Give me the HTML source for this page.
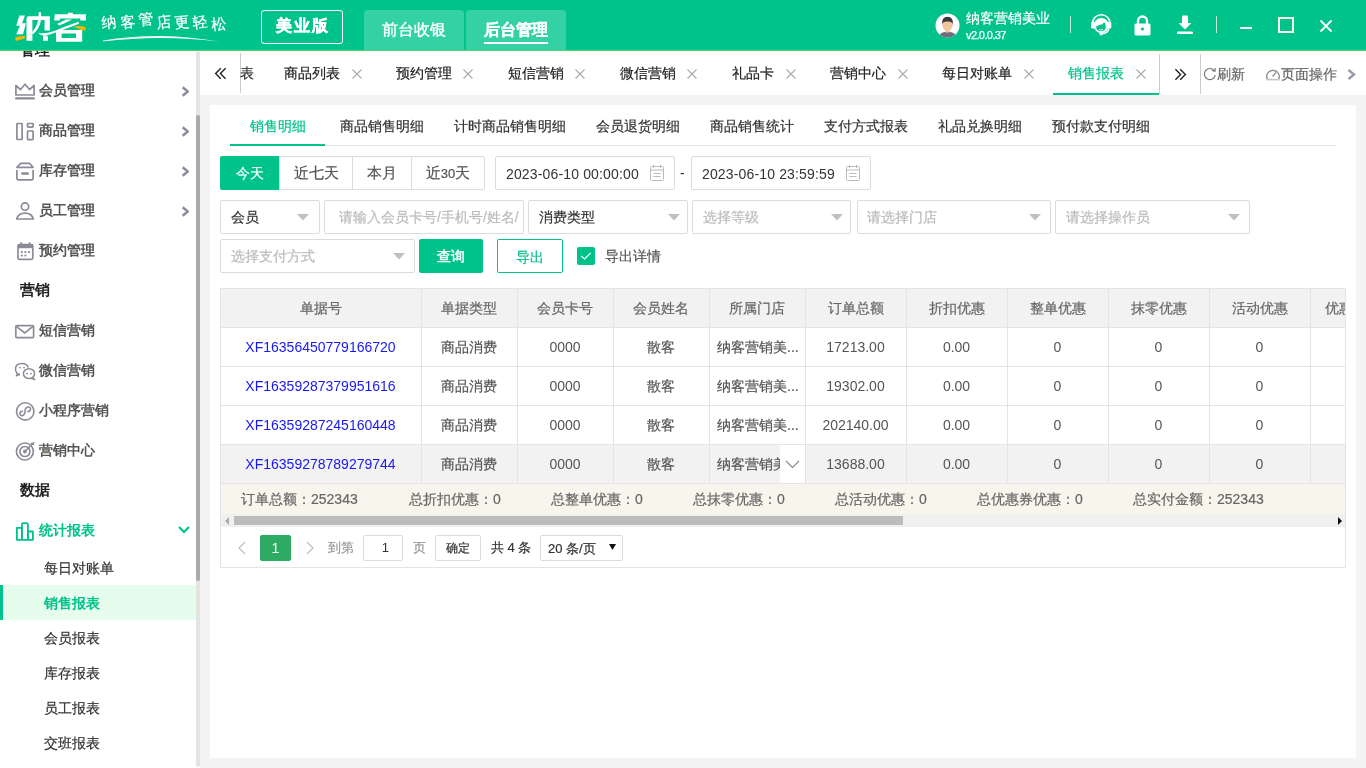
<!DOCTYPE html>
<html><head><meta charset="utf-8">
<style>
*{box-sizing:border-box;margin:0;padding:0}
html,body{width:1366px;height:768px;overflow:hidden;background:#f4f4f4;font-family:"Liberation Sans",sans-serif;font-size:14px;color:#333}
.a{position:absolute;white-space:nowrap}
body>div{will-change:transform}
.a{-webkit-text-stroke:0.2px currentColor}
.a[style*="bold"]{-webkit-text-stroke:0}
#hdr{position:absolute;left:0;top:0;width:1366px;height:51px;background:#00c28b;border-bottom:1px solid #4fd470;z-index:5}
#side{position:absolute;left:0;top:51px;width:200px;height:717px;background:#fff;overflow:hidden}
#tabbar{position:absolute;left:200px;top:51px;width:1166px;height:44px;background:#fff}
#panel{position:absolute;left:210px;top:105px;width:1146px;height:653px;background:#fff}
</style></head><body>
<div id="hdr">
<svg class="a" style="left:10px;top:5px" width="85" height="42" viewBox="0 0 1366 675">
<g fill="#fff">
<path d="M150 168 L240 168 L195 295 L255 295 L210 470 L100 470 L160 335 L100 335 Z"/>
<path d="M460 115 H500 V180 H640 V410 H555 V240 H360 V575 H265 V220 Q265 180 300 180 H460 Z"/>
<path d="M455 235 Q430 360 350 440 L370 470 Q480 380 500 235 Z"/>
<path d="M530 500 H610 V575 H530 Z"/>
<path d="M720 150 H930 V125 H1010 V150 H1220 V250 H1130 V215 H800 V250 H710 Z"/>
<path d="M900 235 L1000 235 Q880 300 790 330 L760 300 Q840 270 900 235 Z"/>
<path d="M1100 270 L1110 300 Q800 420 560 500 Q500 500 450 445 Q560 470 700 420 Q900 340 1100 270 Z"/>
<path d="M740 400 H1160 V590 H740 Z M830 460 V530 H1060 V460 Z" fill-rule="evenodd"/>
</g>
<path d="M85 520 Q160 500 245 500 L235 540 Q160 560 90 578 Z" fill="#f5b800"/>
<path d="M1030 345 Q1110 330 1220 355 L1210 410 Q1130 400 1050 360 Z" fill="#f5b800"/>
</svg>
<div class="a" style="left:101px;top:15px;font-size:15px;line-height:15px;color:#fff;font-family:'Liberation Serif',serif;transform:rotate(-6deg)">纳</div><div class="a" style="left:120px;top:15px;font-size:15px;line-height:15px;color:#fff;font-family:'Liberation Serif',serif;transform:rotate(-6deg)">客</div><div class="a" style="left:138px;top:12px;font-size:15px;line-height:15px;color:#fff;font-family:'Liberation Serif',serif;transform:rotate(-6deg)">管</div><div class="a" style="left:156px;top:15px;font-size:15px;line-height:15px;color:#fff;font-family:'Liberation Serif',serif;transform:rotate(-6deg)">店</div><div class="a" style="left:174px;top:15px;font-size:15px;line-height:15px;color:#fff;font-family:'Liberation Serif',serif;transform:rotate(-6deg)">更</div><div class="a" style="left:192px;top:15px;font-size:15px;line-height:15px;color:#fff;font-family:'Liberation Serif',serif;transform:rotate(-6deg)">轻</div><div class="a" style="left:211px;top:17px;font-size:15px;line-height:15px;color:#fff;font-family:'Liberation Serif',serif;transform:rotate(-6deg)">松</div>
<svg class="a" style="left:100px;top:32px" width="124" height="10"><path d="M3 8.6 Q60 -1.2 119 9.6 Q60 2.6 3 9.6Z" fill="#fff" opacity=".92"/></svg>
<div class="a" style="left:261px;top:10px;width:82px;height:34px;border:1px solid #fff;border-radius:3px;color:#fff;font-weight:bold;font-size:16px;letter-spacing:2px;padding-left:2px;text-align:center;line-height:30px;-webkit-text-stroke:0.5px #fff">美业版</div>
<div class="a" style="left:364px;top:10px;width:100px;height:40px;background:#33d1a3;border-radius:4px 4px 0 0;color:#fff;font-size:16px;text-align:center;line-height:40px;-webkit-text-stroke:0.35px #fff">前台收银</div>
<div class="a" style="left:466px;top:10px;width:100px;height:40px;background:#33d1a3;border-radius:4px 4px 0 0;color:#fff;font-size:16px;font-weight:bold;text-align:center;line-height:40px;-webkit-text-stroke:0.3px #fff">后台管理</div>
<div class="a" style="left:484px;top:42px;width:64px;height:2px;background:#fff"></div>
<svg class="a" style="left:935px;top:13px" width="25" height="25" viewBox="0 0 25 25">
<circle cx="12.5" cy="12.5" r="12" fill="#fff"/>
<clipPath id="cp"><circle cx="12.5" cy="12.5" r="12"/></clipPath>
<g clip-path="url(#cp)"><ellipse cx="12.5" cy="24.5" rx="9" ry="6" fill="#6e6e80"/><rect x="10.5" y="15.5" width="4" height="4" fill="#f3c59f"/><ellipse cx="12.5" cy="12.3" rx="5" ry="5.6" fill="#f3c59f"/><path d="M7 11.8 Q6.5 4 12.5 3.8 Q18.5 4 18 11.8 Q17 8.3 12.5 8.6 Q8 8.3 7 11.8Z" fill="#3a3a3a"/></g>
</svg>
<div class="a" style="left:966px;top:10px;font-size:14px;color:#fff;line-height:16px">纳客营销美业</div>
<div class="a" style="left:966px;top:29px;font-size:11px;color:#fff;line-height:13px;letter-spacing:-0.6px;-webkit-text-stroke:0.25px #fff">v2.0.0.37</div>
<div class="a" style="left:1070px;top:16px;width:1px;height:17px;background:#bfeedd"></div>
<svg class="a" style="left:1085px;top:10px" width="32" height="32" viewBox="0 0 32 32">
<path d="M7.5 13.5 A8.8 8.8 0 0 1 25.1 13.5" stroke="#fff" stroke-width="1.6" fill="none"/>
<circle cx="16.3" cy="15.5" r="7.6" fill="#fff"/>
<rect x="6" y="12" width="4.5" height="6.5" rx="1.2" fill="#fff"/><rect x="21.8" y="12" width="4.5" height="6.5" rx="1.2" fill="#fff"/>
<path d="M11 16.5 Q14 14.5 17.5 14.2 Q18.5 12.8 19.2 12.2 Q20.6 13.5 20.8 16.5 Q20.8 21 16 21.3 Q11.5 21 11 16.5Z" fill="#00c28b"/>
<path d="M14.2 19.6 Q16 20.6 18 19.4" stroke="#fff" stroke-width="0.9" fill="none"/>
<path d="M24 18.5 Q23 23.5 16.5 23.8" stroke="#fff" stroke-width="1.4" fill="none"/><circle cx="16" cy="23.8" r="1.6" fill="#fff"/>
</svg>
<svg class="a" style="left:1134px;top:15px" width="17" height="21" viewBox="0 0 17 21">
<path d="M4 9 V6 A4.5 4.5 0 0 1 13 6 V9" stroke="#fff" stroke-width="2.3" fill="none"/>
<rect x="0.5" y="8.5" width="16" height="12" rx="1.5" fill="#fff"/><circle cx="8.5" cy="14" r="1.6" fill="#00c28b"/>
</svg>
<svg class="a" style="left:1177px;top:15px" width="16" height="20" viewBox="0 0 16 20">
<rect x="5" y="0.5" width="6" height="8" rx="1" fill="#fff"/><path d="M1.5 8 H14.5 L8 14.5Z" fill="#fff"/><rect x="0" y="16.5" width="16" height="2.6" rx="1.2" fill="#fff"/>
</svg>
<div class="a" style="left:1216px;top:16px;width:1px;height:17px;background:#bfeedd"></div>
<div class="a" style="left:1240px;top:27px;width:12px;height:2px;background:#fff"></div>
<div class="a" style="left:1278px;top:17px;width:16px;height:16px;border:2px solid #fbfde8"></div>
<svg class="a" style="left:1319px;top:19px" width="14" height="14" viewBox="0 0 14 14"><path d="M1.5 1.5 L12.5 12.5 M12.5 1.5 L1.5 12.5" stroke="#fff" stroke-width="1.8"/></svg>
</div>
<div id="side"><svg class="a" style="left:0;top:-51px" width="196" height="768" viewBox="0 0 196 768" fill="none" stroke="#8b8b99" stroke-width="1.7">
<path d="M15.9 95 V85.5 L20.5 89.5 L25 84.2 L29.5 89.5 L34.1 85.5 V95 Z" stroke-linejoin="round"/><rect x="15" y="97.2" width="20" height="2.4" rx="1.1" fill="#8b8b99" stroke="none"/>
<rect x="16.9" y="123.5" width="5.2" height="16" rx="0.6"/><rect x="27.5" y="123.5" width="5.6" height="3.6" rx="0.6"/><rect x="27.5" y="131" width="5.6" height="8.6" rx="0.6"/>
<path d="M16.9 167.3 L20.6 163.3 H29.5 L33.1 167.3 Z" stroke-linejoin="round"/><path d="M16.9 170 V178 Q16.9 179.8 18.7 179.8 H31.3 Q33.1 179.8 33.1 178 V170"/><rect x="21.1" y="172.2" width="7.8" height="2.5" rx="1.2" fill="#8b8b99" stroke="none"/>
<circle cx="25" cy="206.6" r="3.7"/><path d="M16.6 219 Q18.5 213.2 25 213.2 Q31.5 213.2 33.4 219 Z" stroke-linejoin="round"/>
<rect x="18" y="244.6" width="14.8" height="14.8" rx="1.3"/><rect x="18" y="244.6" width="14.8" height="3.6" fill="#8b8b99" stroke="none"/><rect x="20.3" y="242.3" width="1.8" height="3" fill="#8b8b99" stroke="none"/><rect x="28.7" y="242.3" width="1.8" height="3" fill="#8b8b99" stroke="none"/>
<g fill="#8b8b99" stroke="none"><rect x="20.8" y="251.2" width="2" height="1.8"/><rect x="24.4" y="251.2" width="2" height="1.8"/><rect x="28" y="251.2" width="2" height="1.8"/><rect x="20.8" y="254.6" width="2" height="1.8"/><rect x="24.4" y="254.6" width="2" height="1.8"/></g>
<rect x="15.8" y="325.6" width="17.8" height="12" rx="1.2"/><path d="M16.3 326.3 L24.7 333 L33.1 326.3"/>
<path d="M20 374.5 Q15.5 373.5 15.5 369 Q15.5 363.5 22 363.5 Q27 363.5 28.3 367.5" stroke-width="1.5"/><path d="M17.5 373.2 L16.2 376 L19.8 374.6" stroke-width="1.3" stroke-linejoin="round"/>
<ellipse cx="29" cy="373.6" rx="5.6" ry="4.9" stroke-width="1.5" fill="#fff"/><path d="M32.5 377.5 L34.8 379.5 L31.5 378.6" stroke-width="1.3" stroke-linejoin="round"/>
<g fill="#8b8b99" stroke="none"><circle cx="20" cy="367.6" r="0.9"/><circle cx="24" cy="367.6" r="0.9"/><circle cx="27" cy="373.6" r="0.9"/><circle cx="31" cy="373.6" r="0.9"/></g>
<circle cx="25.25" cy="411.4" r="8.7" stroke-width="1.6"/><path d="M22.5 411.2 Q19.8 411.4 19.9 413.8 Q20.3 416 22.6 415.6 Q24.6 415 24.9 412 L25.2 410.2 Q25.6 407.3 27.8 407 Q30.4 406.8 30.5 409 Q30.5 411.2 27.9 411.6" stroke-width="1.6" stroke-linecap="round"/>
<circle cx="24.9" cy="451.5" r="8.5" stroke-width="1.7"/><circle cx="24.9" cy="451.5" r="5" stroke-width="1.7"/><circle cx="24.9" cy="451.5" r="1.9" fill="#8b8b99" stroke="none"/>
<path d="M24.9 451.5 L32.5 443.8" stroke-width="1.6"/><path d="M30.5 442.8 L31.6 444.7 L33.8 445.2 L34.6 442.2 Z" fill="#8b8b99" stroke="none"/>
<g stroke="#00c28b" stroke-width="1.8" stroke-linejoin="round"><rect x="16.9" y="527.8" width="5" height="12"/><rect x="21.9" y="523.1" width="6" height="16.7" rx="1.3"/><rect x="27.9" y="531.5" width="5" height="8.3"/></g>
</svg><div class="a" style="left:20px;top:-11px;line-height:20px;font-size:15px;font-weight:bold;color:#222">管理</div><div class="a" style="left:39px;top:29px;line-height:20px;color:#555;font-size:14px;font-weight:bold">会员管理</div><svg class="a" style="left:181px;top:35px" width="9" height="11" viewBox="0 0 9 11"><path d="M1.6 1.3 L6.8 5.5 L1.6 9.7" stroke="#8b8b9b" stroke-width="2.4" fill="none" stroke-linejoin="round"/></svg><div class="a" style="left:39px;top:69px;line-height:20px;color:#555;font-size:14px;font-weight:bold">商品管理</div><svg class="a" style="left:181px;top:75px" width="9" height="11" viewBox="0 0 9 11"><path d="M1.6 1.3 L6.8 5.5 L1.6 9.7" stroke="#8b8b9b" stroke-width="2.4" fill="none" stroke-linejoin="round"/></svg><div class="a" style="left:39px;top:109px;line-height:20px;color:#555;font-size:14px;font-weight:bold">库存管理</div><svg class="a" style="left:181px;top:115px" width="9" height="11" viewBox="0 0 9 11"><path d="M1.6 1.3 L6.8 5.5 L1.6 9.7" stroke="#8b8b9b" stroke-width="2.4" fill="none" stroke-linejoin="round"/></svg><div class="a" style="left:39px;top:149px;line-height:20px;color:#555;font-size:14px;font-weight:bold">员工管理</div><svg class="a" style="left:181px;top:155px" width="9" height="11" viewBox="0 0 9 11"><path d="M1.6 1.3 L6.8 5.5 L1.6 9.7" stroke="#8b8b9b" stroke-width="2.4" fill="none" stroke-linejoin="round"/></svg><div class="a" style="left:39px;top:189px;line-height:20px;color:#555;font-size:14px;font-weight:bold">预约管理</div><div class="a" style="left:20px;top:229px;line-height:20px;font-size:15px;font-weight:bold;color:#222">营销</div><div class="a" style="left:39px;top:269px;line-height:20px;color:#555;font-size:14px;font-weight:bold">短信营销</div><div class="a" style="left:39px;top:309px;line-height:20px;color:#555;font-size:14px;font-weight:bold">微信营销</div><div class="a" style="left:39px;top:349px;line-height:20px;color:#555;font-size:14px;font-weight:bold">小程序营销</div><div class="a" style="left:39px;top:389px;line-height:20px;color:#555;font-size:14px;font-weight:bold">营销中心</div><div class="a" style="left:20px;top:429px;line-height:20px;font-size:15px;font-weight:bold;color:#222">数据</div><div class="a" style="left:39px;top:469px;line-height:20px;color:#00c28b;font-size:14px;font-weight:bold">统计报表</div><svg class="a" style="left:178px;top:475px" width="12" height="8" viewBox="0 0 12 8"><path d="M1 1 L6 6 L11 1" stroke="#00c28b" stroke-width="2.2" fill="none"/></svg><div class="a" style="left:0;top:534px;width:196px;height:35px;background:#e6fcec"></div><div class="a" style="left:0;top:534px;width:3px;height:35px;background:#00c28b"></div><div class="a" style="left:44px;top:507px;line-height:20px;color:#333;font-size:14px">每日对账单</div><div class="a" style="left:44px;top:542px;line-height:20px;color:#00c28b;font-size:14px;font-weight:bold">销售报表</div><div class="a" style="left:44px;top:577px;line-height:20px;color:#333;font-size:14px">会员报表</div><div class="a" style="left:44px;top:612px;line-height:20px;color:#333;font-size:14px">库存报表</div><div class="a" style="left:44px;top:647px;line-height:20px;color:#333;font-size:14px">员工报表</div><div class="a" style="left:44px;top:682px;line-height:20px;color:#333;font-size:14px">交班报表</div><div class="a" style="left:196px;top:0;width:4px;height:716px;background:#e3e3e3;border-radius:2px"></div><div class="a" style="left:196px;top:64px;width:4px;height:466px;background:#aaa;border-radius:2px"></div></div>
<div id="tabbar"><svg class="a" style="left:14px;top:16px" width="13" height="13" viewBox="0 0 13 13"><path d="M6.8 1.2 L1.6 6.5 L6.8 11.8 M11.6 1.2 L6.4 6.5 L11.6 11.8" stroke="#222" stroke-width="1.4" fill="none"/></svg><div class="a" style="left:40px;top:2px;width:1px;height:40px;background:#ccc"></div><div class="a" style="left:40px;top:12px;line-height:20px;width:14px;overflow:hidden">表</div><div class="a" style="left:84px;top:12px;line-height:20px;color:#222">商品列表</div><svg class="a" style="left:152px;top:18px" width="10" height="10" viewBox="0 0 10 10"><path d="M0.5 0.5 L9.5 9.5 M9.5 0.5 L0.5 9.5" stroke="#aaa" stroke-width="1.1"/></svg><div class="a" style="left:196px;top:12px;line-height:20px;color:#222">预约管理</div><svg class="a" style="left:263px;top:18px" width="10" height="10" viewBox="0 0 10 10"><path d="M0.5 0.5 L9.5 9.5 M9.5 0.5 L0.5 9.5" stroke="#aaa" stroke-width="1.1"/></svg><div class="a" style="left:308px;top:12px;line-height:20px;color:#222">短信营销</div><svg class="a" style="left:375px;top:18px" width="10" height="10" viewBox="0 0 10 10"><path d="M0.5 0.5 L9.5 9.5 M9.5 0.5 L0.5 9.5" stroke="#aaa" stroke-width="1.1"/></svg><div class="a" style="left:420px;top:12px;line-height:20px;color:#222">微信营销</div><svg class="a" style="left:487px;top:18px" width="10" height="10" viewBox="0 0 10 10"><path d="M0.5 0.5 L9.5 9.5 M9.5 0.5 L0.5 9.5" stroke="#aaa" stroke-width="1.1"/></svg><div class="a" style="left:532px;top:12px;line-height:20px;color:#222">礼品卡</div><svg class="a" style="left:586px;top:18px" width="10" height="10" viewBox="0 0 10 10"><path d="M0.5 0.5 L9.5 9.5 M9.5 0.5 L0.5 9.5" stroke="#aaa" stroke-width="1.1"/></svg><div class="a" style="left:630px;top:12px;line-height:20px;color:#222">营销中心</div><svg class="a" style="left:698px;top:18px" width="10" height="10" viewBox="0 0 10 10"><path d="M0.5 0.5 L9.5 9.5 M9.5 0.5 L0.5 9.5" stroke="#aaa" stroke-width="1.1"/></svg><div class="a" style="left:742px;top:12px;line-height:20px;color:#222">每日对账单</div><svg class="a" style="left:824px;top:18px" width="10" height="10" viewBox="0 0 10 10"><path d="M0.5 0.5 L9.5 9.5 M9.5 0.5 L0.5 9.5" stroke="#aaa" stroke-width="1.1"/></svg><div class="a" style="left:868px;top:12px;line-height:20px;color:#00c28b">销售报表</div><svg class="a" style="left:936px;top:18px" width="10" height="10" viewBox="0 0 10 10"><path d="M0.5 0.5 L9.5 9.5 M9.5 0.5 L0.5 9.5" stroke="#aaa" stroke-width="1.1"/></svg><div class="a" style="left:853px;top:42px;width:106px;height:2px;background:#00c28b"></div><div class="a" style="left:959px;top:3px;width:1px;height:40px;background:#ccc"></div><svg class="a" style="left:974px;top:17px" width="13" height="13" viewBox="0 0 13 13"><path d="M1.4 1.2 L6.6 6.5 L1.4 11.8 M6.2 1.2 L11.4 6.5 L6.2 11.8" stroke="#222" stroke-width="1.4" fill="none"/></svg><div class="a" style="left:1000px;top:3px;width:1px;height:40px;background:#ccc"></div><svg class="a" style="left:1003px;top:16px" width="14" height="14" viewBox="0 0 14 14"><path d="M11.5 4 A5.5 5.5 0 1 0 12.3 8" stroke="#777" stroke-width="1.2" fill="none"/><path d="M9 3.5 L12 4.2 L12.2 1" stroke="#777" stroke-width="1.2" fill="none"/></svg><div class="a" style="left:1017px;top:13px;line-height:20px;color:#666;font-size:14px">刷新</div><svg class="a" style="left:1065px;top:16px" width="16" height="14" viewBox="0 0 16 14"><path d="M2.3 12.3 A6.3 6.3 0 1 1 13.7 12.3" stroke="#8a8a8a" stroke-width="1.2" fill="none"/><path d="M7.5 9.5 L11 5.5" stroke="#8a8a8a" stroke-width="1.2"/><rect x="1.5" y="11.8" width="13" height="1.6" fill="#c4c4c4"/></svg><div class="a" style="left:1081px;top:13px;line-height:20px;color:#666;font-size:14px">页面操作</div><svg class="a" style="left:1147px;top:18px" width="9" height="11" viewBox="0 0 9 11"><path d="M1.5 1 L7 5.5 L1.5 10" stroke="#9a9aa6" stroke-width="2.4" fill="none"/></svg></div>
<div id="panel"><div class="a" style="left:40px;top:11px;line-height:20px;color:#00c28b">销售明细</div><div class="a" style="left:130px;top:11px;line-height:20px;color:#333">商品销售明细</div><div class="a" style="left:244px;top:11px;line-height:20px;color:#333">计时商品销售明细</div><div class="a" style="left:386px;top:11px;line-height:20px;color:#333">会员退货明细</div><div class="a" style="left:500px;top:11px;line-height:20px;color:#333">商品销售统计</div><div class="a" style="left:614px;top:11px;line-height:20px;color:#333">支付方式报表</div><div class="a" style="left:728px;top:11px;line-height:20px;color:#333">礼品兑换明细</div><div class="a" style="left:842px;top:11px;line-height:20px;color:#333">预付款支付明细</div><div class="a" style="left:20px;top:40px;width:1106px;height:1px;background:#e6e6e6"></div><div class="a" style="left:20px;top:39px;width:95px;height:2px;background:#00c28b"></div><div class="a" style="left:10px;top:51px;width:265px;height:34px;border:1px solid #dcdcdc;border-radius:2px"></div><div class="a" style="left:10px;top:51px;width:59px;height:34px;background:#00c28b;border-radius:2px 0 0 2px;color:#fff;text-align:center;line-height:34px">今天</div><div class="a" style="left:69px;top:51px;width:1px;height:34px;background:#dcdcdc"></div><div class="a" style="left:142px;top:51px;width:1px;height:34px;background:#dcdcdc"></div><div class="a" style="left:201px;top:51px;width:1px;height:34px;background:#dcdcdc"></div><div class="a" style="left:70px;top:51px;width:72px;height:34px;color:#555;text-align:center;line-height:34px;font-size:15px">近七天</div><div class="a" style="left:143px;top:51px;width:58px;height:34px;color:#555;text-align:center;line-height:34px;font-size:15px">本月</div><div class="a" style="left:202px;top:51px;width:72px;height:34px;color:#555;text-align:center;line-height:34px;font-size:15px">近<span style="font-size:13px">30</span>天</div><div class="a" style="left:285px;top:51px;width:180px;height:34px;border:1px solid #dcdcdc;border-radius:2px"></div><div class="a" style="left:296px;top:59px;line-height:20px;color:#333;font-size:14px;letter-spacing:0.15px;-webkit-text-stroke:0">2023-06-10 00:00:00</div><svg class="a" style="left:440px;top:60px" width="14" height="16" viewBox="0 0 14 16"><rect x="0.5" y="1.5" width="13" height="14" rx="1" stroke="#bbb" stroke-width="1" fill="none"/><path d="M3.5 0 V3 M10.5 0 V3 M0.5 5 H13.5 M3.5 8.5 H10.5 M3.5 11.5 H10.5" stroke="#bbb" stroke-width="1"/></svg><div class="a" style="left:470px;top:58px;line-height:20px;color:#333;-webkit-text-stroke:0">-</div><div class="a" style="left:481px;top:51px;width:180px;height:34px;border:1px solid #dcdcdc;border-radius:2px"></div><div class="a" style="left:492px;top:59px;line-height:20px;color:#333;font-size:14px;letter-spacing:0.15px;-webkit-text-stroke:0">2023-06-10 23:59:59</div><svg class="a" style="left:636px;top:60px" width="14" height="16" viewBox="0 0 14 16"><rect x="0.5" y="1.5" width="13" height="14" rx="1" stroke="#bbb" stroke-width="1" fill="none"/><path d="M3.5 0 V3 M10.5 0 V3 M0.5 5 H13.5 M3.5 8.5 H10.5 M3.5 11.5 H10.5" stroke="#bbb" stroke-width="1"/></svg><div class="a" style="left:10px;top:95px;width:100px;height:34px;border:1px solid #dcdcdc;border-radius:2px;background:#fff"></div><div class="a" style="left:21px;top:102px;line-height:20px;color:#333;font-size:14px">会员</div><svg class="a" style="left:87px;top:109px" width="12" height="7" viewBox="0 0 12 7"><path d="M0 0 H12 L6 6.5Z" fill="#c0c0c0"/></svg><div class="a" style="left:114px;top:95px;width:200px;height:34px;border:1px solid #dcdcdc;border-radius:2px;background:#fff"></div><div class="a" style="left:129px;top:102px;width:184px;overflow:hidden;line-height:20px;color:#bbb">请输入会员卡号/手机号/姓名/</div><div class="a" style="left:318px;top:95px;width:160px;height:34px;border:1px solid #dcdcdc;border-radius:2px;background:#fff"></div><div class="a" style="left:329px;top:102px;line-height:20px;color:#333;font-size:14px">消费类型</div><svg class="a" style="left:458px;top:109px" width="12" height="7" viewBox="0 0 12 7"><path d="M0 0 H12 L6 6.5Z" fill="#c0c0c0"/></svg><div class="a" style="left:482px;top:95px;width:159px;height:34px;border:1px solid #dcdcdc;border-radius:2px;background:#fff"></div><div class="a" style="left:493px;top:102px;line-height:20px;color:#bbb;font-size:14px">选择等级</div><svg class="a" style="left:621px;top:109px" width="12" height="7" viewBox="0 0 12 7"><path d="M0 0 H12 L6 6.5Z" fill="#c0c0c0"/></svg><div class="a" style="left:647px;top:95px;width:194px;height:34px;border:1px solid #dcdcdc;border-radius:2px;background:#fff"></div><div class="a" style="left:657px;top:102px;line-height:20px;color:#bbb;font-size:14px">请选择门店</div><svg class="a" style="left:819px;top:109px" width="12" height="7" viewBox="0 0 12 7"><path d="M0 0 H12 L6 6.5Z" fill="#c0c0c0"/></svg><div class="a" style="left:845px;top:95px;width:195px;height:34px;border:1px solid #dcdcdc;border-radius:2px;background:#fff"></div><div class="a" style="left:856px;top:102px;line-height:20px;color:#bbb;font-size:14px">请选择操作员</div><svg class="a" style="left:1018px;top:109px" width="12" height="7" viewBox="0 0 12 7"><path d="M0 0 H12 L6 6.5Z" fill="#c0c0c0"/></svg><div class="a" style="left:10px;top:134px;width:195px;height:34px;border:1px solid #dcdcdc;border-radius:2px;background:#fff"></div><div class="a" style="left:21px;top:141px;line-height:20px;color:#bbb;font-size:14px">选择支付方式</div><svg class="a" style="left:183px;top:148px" width="12" height="7" viewBox="0 0 12 7"><path d="M0 0 H12 L6 6.5Z" fill="#c0c0c0"/></svg><div class="a" style="left:209px;top:134px;width:64px;height:34px;background:#00c28b;border-radius:2px;color:#fff;text-align:center;line-height:34px;-webkit-text-stroke:0.45px #fff">查询</div><div class="a" style="left:287px;top:134px;width:66px;height:34px;border:1px solid #00c28b;border-radius:2px;color:#00c28b;text-align:center;line-height:33px;padding-top:1px">导出</div><svg class="a" style="left:367px;top:142px" width="18" height="18" viewBox="0 0 18 18"><rect x="0" y="0" width="18" height="18" rx="2" fill="#00c28b"/><path d="M4.3 9 L7.6 12 L13.7 5.8" stroke="#fff" stroke-width="1.2" fill="none"/></svg><div class="a" style="left:395px;top:141px;line-height:20px;color:#555;font-size:14px">导出详情</div><div class="a" style="left:10px;top:183px;width:1125px;height:39px;background:#f2f2f2"></div><div class="a" style="left:10px;top:339px;width:1125px;height:39px;background:#f2f2f2"></div><div class="a" style="left:10px;top:183px;width:1125px;height:1px;background:#e4e4e4"></div><div class="a" style="left:10px;top:222px;width:1125px;height:1px;background:#e4e4e4"></div><div class="a" style="left:10px;top:261px;width:1125px;height:1px;background:#e4e4e4"></div><div class="a" style="left:10px;top:300px;width:1125px;height:1px;background:#e4e4e4"></div><div class="a" style="left:10px;top:339px;width:1125px;height:1px;background:#e4e4e4"></div><div class="a" style="left:10px;top:378px;width:1125px;height:1px;background:#e4e4e4"></div><div class="a" style="left:10px;top:183px;width:1px;height:195px;background:#e4e4e4"></div><div class="a" style="left:211px;top:183px;width:1px;height:195px;background:#e4e4e4"></div><div class="a" style="left:307px;top:183px;width:1px;height:195px;background:#e4e4e4"></div><div class="a" style="left:403px;top:183px;width:1px;height:195px;background:#e4e4e4"></div><div class="a" style="left:499px;top:183px;width:1px;height:195px;background:#e4e4e4"></div><div class="a" style="left:595px;top:183px;width:1px;height:195px;background:#e4e4e4"></div><div class="a" style="left:696px;top:183px;width:1px;height:195px;background:#e4e4e4"></div><div class="a" style="left:797px;top:183px;width:1px;height:195px;background:#e4e4e4"></div><div class="a" style="left:898px;top:183px;width:1px;height:195px;background:#e4e4e4"></div><div class="a" style="left:999px;top:183px;width:1px;height:195px;background:#e4e4e4"></div><div class="a" style="left:1100px;top:183px;width:1px;height:195px;background:#e4e4e4"></div><div class="a" style="left:1135px;top:183px;width:1px;height:195px;background:#e4e4e4"></div><div class="a" style="left:10px;top:193px;width:201px;text-align:center;line-height:20px;color:#666">单据号</div><div class="a" style="left:211px;top:193px;width:96px;text-align:center;line-height:20px;color:#666">单据类型</div><div class="a" style="left:307px;top:193px;width:96px;text-align:center;line-height:20px;color:#666">会员卡号</div><div class="a" style="left:403px;top:193px;width:96px;text-align:center;line-height:20px;color:#666">会员姓名</div><div class="a" style="left:499px;top:193px;width:96px;text-align:center;line-height:20px;color:#666">所属门店</div><div class="a" style="left:595px;top:193px;width:101px;text-align:center;line-height:20px;color:#666">订单总额</div><div class="a" style="left:696px;top:193px;width:101px;text-align:center;line-height:20px;color:#666">折扣优惠</div><div class="a" style="left:797px;top:193px;width:101px;text-align:center;line-height:20px;color:#666">整单优惠</div><div class="a" style="left:898px;top:193px;width:101px;text-align:center;line-height:20px;color:#666">抹零优惠</div><div class="a" style="left:999px;top:193px;width:101px;text-align:center;line-height:20px;color:#666">活动优惠</div><div class="a" style="left:1100px;top:183px;width:35px;height:39px;overflow:hidden"><div class="a" style="left:15px;top:10px;line-height:20px;color:#666">优惠券</div></div><div class="a" style="left:10px;top:232px;width:201px;text-align:center;line-height:20px;color:#1818f5;-webkit-text-stroke:0">XF16356450779166720</div><div class="a" style="left:211px;top:232px;width:96px;text-align:center;line-height:20px;color:#555">商品消费</div><div class="a" style="left:307px;top:232px;width:96px;text-align:center;line-height:20px;color:#555;-webkit-text-stroke:0">0000</div><div class="a" style="left:403px;top:232px;width:96px;text-align:center;line-height:20px;color:#555">散客</div><div class="a" style="left:507px;top:232px;line-height:20px;color:#555;width:88px;overflow:hidden">纳客营销美...</div><div class="a" style="left:595px;top:232px;width:101px;text-align:center;line-height:20px;color:#555;-webkit-text-stroke:0">17213.00</div><div class="a" style="left:696px;top:232px;width:101px;text-align:center;line-height:20px;color:#555;-webkit-text-stroke:0">0.00</div><div class="a" style="left:797px;top:232px;width:101px;text-align:center;line-height:20px;color:#555;-webkit-text-stroke:0">0</div><div class="a" style="left:898px;top:232px;width:101px;text-align:center;line-height:20px;color:#555;-webkit-text-stroke:0">0</div><div class="a" style="left:999px;top:232px;width:101px;text-align:center;line-height:20px;color:#555;-webkit-text-stroke:0">0</div><div class="a" style="left:10px;top:271px;width:201px;text-align:center;line-height:20px;color:#1818f5;-webkit-text-stroke:0">XF16359287379951616</div><div class="a" style="left:211px;top:271px;width:96px;text-align:center;line-height:20px;color:#555">商品消费</div><div class="a" style="left:307px;top:271px;width:96px;text-align:center;line-height:20px;color:#555;-webkit-text-stroke:0">0000</div><div class="a" style="left:403px;top:271px;width:96px;text-align:center;line-height:20px;color:#555">散客</div><div class="a" style="left:507px;top:271px;line-height:20px;color:#555;width:88px;overflow:hidden">纳客营销美...</div><div class="a" style="left:595px;top:271px;width:101px;text-align:center;line-height:20px;color:#555;-webkit-text-stroke:0">19302.00</div><div class="a" style="left:696px;top:271px;width:101px;text-align:center;line-height:20px;color:#555;-webkit-text-stroke:0">0.00</div><div class="a" style="left:797px;top:271px;width:101px;text-align:center;line-height:20px;color:#555;-webkit-text-stroke:0">0</div><div class="a" style="left:898px;top:271px;width:101px;text-align:center;line-height:20px;color:#555;-webkit-text-stroke:0">0</div><div class="a" style="left:999px;top:271px;width:101px;text-align:center;line-height:20px;color:#555;-webkit-text-stroke:0">0</div><div class="a" style="left:10px;top:310px;width:201px;text-align:center;line-height:20px;color:#1818f5;-webkit-text-stroke:0">XF16359287245160448</div><div class="a" style="left:211px;top:310px;width:96px;text-align:center;line-height:20px;color:#555">商品消费</div><div class="a" style="left:307px;top:310px;width:96px;text-align:center;line-height:20px;color:#555;-webkit-text-stroke:0">0000</div><div class="a" style="left:403px;top:310px;width:96px;text-align:center;line-height:20px;color:#555">散客</div><div class="a" style="left:507px;top:310px;line-height:20px;color:#555;width:88px;overflow:hidden">纳客营销美...</div><div class="a" style="left:595px;top:310px;width:101px;text-align:center;line-height:20px;color:#555;-webkit-text-stroke:0">202140.00</div><div class="a" style="left:696px;top:310px;width:101px;text-align:center;line-height:20px;color:#555;-webkit-text-stroke:0">0.00</div><div class="a" style="left:797px;top:310px;width:101px;text-align:center;line-height:20px;color:#555;-webkit-text-stroke:0">0</div><div class="a" style="left:898px;top:310px;width:101px;text-align:center;line-height:20px;color:#555;-webkit-text-stroke:0">0</div><div class="a" style="left:999px;top:310px;width:101px;text-align:center;line-height:20px;color:#555;-webkit-text-stroke:0">0</div><div class="a" style="left:10px;top:349px;width:201px;text-align:center;line-height:20px;color:#1818f5;-webkit-text-stroke:0">XF16359278789279744</div><div class="a" style="left:211px;top:349px;width:96px;text-align:center;line-height:20px;color:#555">商品消费</div><div class="a" style="left:307px;top:349px;width:96px;text-align:center;line-height:20px;color:#555;-webkit-text-stroke:0">0000</div><div class="a" style="left:403px;top:349px;width:96px;text-align:center;line-height:20px;color:#555">散客</div><div class="a" style="left:507px;top:349px;line-height:20px;color:#555;width:88px;overflow:hidden">纳客营销美</div><div class="a" style="left:595px;top:349px;width:101px;text-align:center;line-height:20px;color:#555;-webkit-text-stroke:0">13688.00</div><div class="a" style="left:696px;top:349px;width:101px;text-align:center;line-height:20px;color:#555;-webkit-text-stroke:0">0.00</div><div class="a" style="left:797px;top:349px;width:101px;text-align:center;line-height:20px;color:#555;-webkit-text-stroke:0">0</div><div class="a" style="left:898px;top:349px;width:101px;text-align:center;line-height:20px;color:#555;-webkit-text-stroke:0">0</div><div class="a" style="left:999px;top:349px;width:101px;text-align:center;line-height:20px;color:#555;-webkit-text-stroke:0">0</div><div class="a" style="left:570px;top:340px;width:25px;height:38px;background:#fff"></div><svg class="a" style="left:575px;top:355px" width="15" height="9" viewBox="0 0 15 9"><path d="M1 1 L7.5 7.5 L14 1" stroke="#888" stroke-width="1.1" fill="none"/></svg><div class="a" style="left:10px;top:379px;width:1125px;height:30px;background:#f8f5ec"></div><div class="a" style="left:31px;top:384px;line-height:20px;color:#666">订单总额：252343</div><div class="a" style="left:199px;top:384px;line-height:20px;color:#666">总折扣优惠：0</div><div class="a" style="left:341px;top:384px;line-height:20px;color:#666">总整单优惠：0</div><div class="a" style="left:483px;top:384px;line-height:20px;color:#666">总抹零优惠：0</div><div class="a" style="left:625px;top:384px;line-height:20px;color:#666">总活动优惠：0</div><div class="a" style="left:767px;top:384px;line-height:20px;color:#666">总优惠券优惠：0</div><div class="a" style="left:923px;top:384px;line-height:20px;color:#666">总实付金额：252343</div><div class="a" style="left:10px;top:409px;width:1125px;height:13px;background:#f0f0f0"></div><div class="a" style="left:24px;top:411px;width:669px;height:9px;background:#bcbcbc"></div><svg class="a" style="left:14px;top:412px" width="6" height="8" viewBox="0 0 6 8"><path d="M5 0 V8 L1 4Z" fill="#aaa"/></svg><svg class="a" style="left:1127px;top:412px" width="6" height="8" viewBox="0 0 6 8"><path d="M1 0 V8 L5 4Z" fill="#111"/></svg><div class="a" style="left:10px;top:422px;width:1126px;height:41px;border:1px solid #e4e4e4;border-top:none"></div><div class="a" style="left:10px;top:183px;width:1px;height:280px;background:#e4e4e4"></div><div class="a" style="left:1135px;top:183px;width:1px;height:280px;background:#e4e4e4"></div><svg class="a" style="left:27px;top:436px" width="9" height="14" viewBox="0 0 9 14"><path d="M8 1 L2 7 L8 13" stroke="#bbb" stroke-width="1.1" fill="none"/></svg><div class="a" style="left:50px;top:430px;width:31px;height:26px;background:#2dab63;border-radius:2px;color:#fff;text-align:center;line-height:26px;font-size:14px;-webkit-text-stroke:0">1</div><svg class="a" style="left:96px;top:436px" width="9" height="14" viewBox="0 0 9 14"><path d="M1 1 L7 7 L1 13" stroke="#bbb" stroke-width="1.1" fill="none"/></svg><div class="a" style="left:118px;top:433px;line-height:20px;color:#999;font-size:13px">到第</div><div class="a" style="left:153px;top:430px;width:40px;height:26px;border:1px solid #dcdcdc;border-radius:2px;text-align:right;padding-right:13px;line-height:24px;color:#333;font-size:13px;-webkit-text-stroke:0">1</div><div class="a" style="left:203px;top:433px;line-height:20px;color:#999;font-size:13px">页</div><div class="a" style="left:225px;top:430px;width:46px;height:26px;border:1px solid #dcdcdc;border-radius:2px;background:#fff;text-align:center;line-height:25px;color:#333;font-size:12px">确定</div><div class="a" style="left:281px;top:433px;line-height:20px;color:#333;font-size:13px">共 4 条</div><div class="a" style="left:330px;top:430px;width:83px;height:26px;border:1px solid #dcdcdc;border-radius:2px;background:#fff;line-height:25px;color:#333;font-size:13px;padding-left:7px">20 条/页</div><svg class="a" style="left:399px;top:439px" width="7" height="6" viewBox="0 0 7 6"><path d="M0 0 H7 L3.5 6Z" fill="#111"/></svg></div>
</body></html>
